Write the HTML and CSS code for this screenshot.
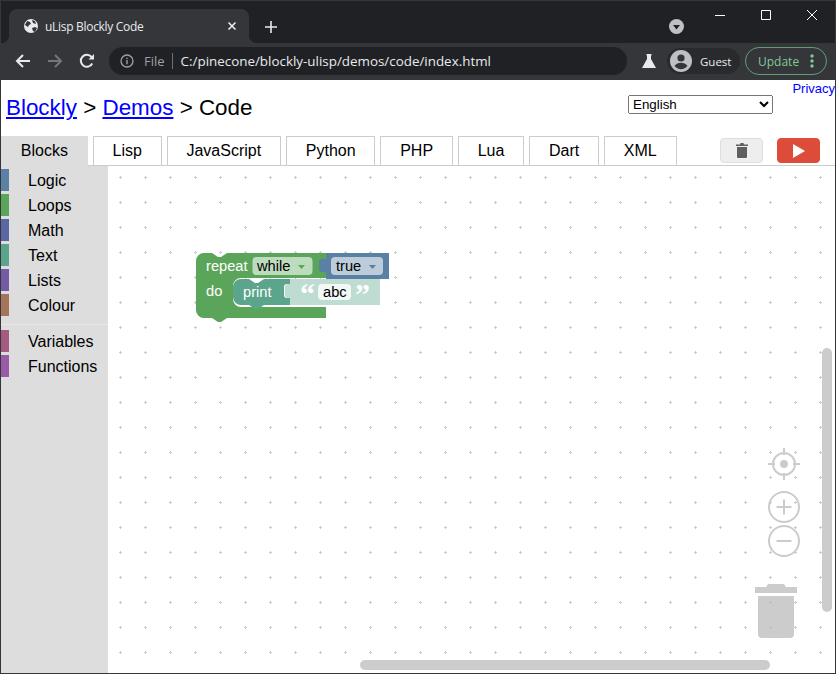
FILE: index.html
```html
<!DOCTYPE html>
<html lang="en">

<head>
    <meta charset="UTF-8">
    <meta name="viewport" content="width=device-width, initial-scale=1.0">
    <title>uLisp Blockly Code</title>
    <link rel="stylesheet" href="styles.css">
</head>

<body>
    <div class="window">
        <!-- Browser tab strip -->
        <div class="tabstrip">
            <div class="browser-tab">
                <svg class="favicon" width="16" height="16" viewBox="0 0 16 16">
                    <circle cx="8" cy="8" r="7" fill="#e8eaed" />
                    <path d="M4 3l3 1 1 2-2 1-1 2-3-2zM9 10l3-1 2 1-2 4-2-1zM9 2l3 1 1 3-3-1z" fill="#35363a" />
                </svg>
                <span class="browser-tab-title">uLisp Blockly Code</span>
                <svg class="tab-close" width="10" height="10" viewBox="0 0 10 10">
                    <path d="M1.5 1.5l7 7M8.5 1.5l-7 7" stroke="#e8eaed" stroke-width="1.6" />
                </svg>
            </div>
            <svg class="new-tab" width="14" height="14" viewBox="0 0 14 14">
                <path d="M7 1v12M1 7h12" stroke="#e8eaed" stroke-width="1.6" />
            </svg>
            <svg class="tab-search" width="15" height="15" viewBox="0 0 15 15">
                <circle cx="7.5" cy="7.5" r="7.5" fill="#bdc1c6" />
                <path d="M4 6h7l-3.500 4.500z" fill="#202124" />
            </svg>
            <div class="window-controls">
                <svg width="10" height="10" viewBox="0 0 10 10">
                    <path d="M0 5.500h10" stroke="#fff" />
                </svg>
                <svg width="10" height="10" viewBox="0 0 10 10">
                    <path d="M.5.500h9v9h-9z" stroke="#fff" fill="none" />
                </svg>
                <svg width="10" height="10" viewBox="0 0 10 10">
                    <path d="M0 0l10 10M10 0L0 10" stroke="#fff" />
                </svg>
            </div>
        </div>

        <!-- Browser toolbar -->
        <div class="toolbar">
            <svg class="nav-icon" width="16" height="16" viewBox="0 0 16 16">
                <path d="M15 8H2M8 2L2 8l6 6" stroke="#e8eaed" stroke-width="2" fill="none" />
            </svg>
            <svg class="nav-icon" width="16" height="16" viewBox="0 0 16 16">
                <path d="M1 8h13M8 2l6 6-6 6" stroke="#74777b" stroke-width="2" fill="none" />
            </svg>
            <svg class="nav-icon" width="16" height="16" viewBox="0 0 16 16">
                <path d="M13.200 10.500A6 6 0 1 1 12.500 4" stroke="#e8eaed" stroke-width="2" fill="none" />
                <path d="M9.500 6.500H15V1z" fill="#e8eaed" />
            </svg>
            <div class="omnibox">
                <svg width="14" height="14" viewBox="0 0 14 14">
                    <circle cx="7" cy="7" r="6" stroke="#9aa0a6" stroke-width="1.300" fill="none" />
                    <path d="M7 6v4.200M7 3.700v1.200" stroke="#9aa0a6" stroke-width="1.400" />
                </svg>
                <span class="omni-scheme">File</span>
                <span class="omni-divider"></span>
                <span class="omni-url">C:/pinecone/blockly-ulisp/demos/code/index.html</span>
            </div>
            <svg class="flask" width="14" height="14" viewBox="0 0 14 14">
                <path d="M4.500 0h5v1.500H9v3.500l5 9H0l5-9V1.500h-.5z" fill="#e8eaed" />
            </svg>
            <div class="guest">
                <svg width="22" height="22" viewBox="0 0 22 22">
                    <circle cx="11" cy="11" r="11" fill="#bdc1c6" />
                    <circle cx="11" cy="8" r="3.600" fill="#35363a" />
                    <path d="M4.500 16c1.500-2.500 4-3.300 6.500-3.300s5 .8 6.500 3.300c-1.500 2-4 3.200-6.500 3.200s-5-1.200-6.500-3.200z" fill="#35363a" />
                </svg>
                <span>Guest</span>
            </div>
            <div class="update">
                <span>Update</span>
                <svg width="4" height="14" viewBox="0 0 4 14">
                    <circle cx="2" cy="2" r="1.700" fill="#81c995" />
                    <circle cx="2" cy="7" r="1.700" fill="#81c995" />
                    <circle cx="2" cy="12" r="1.700" fill="#81c995" />
                </svg>
            </div>
        </div>

        <!-- Page -->
        <div class="page">
            <div class="page-header">
                <h1><a href="#">Blockly</a> &gt; <a href="#">Demos</a> &gt; Code</h1>
                <div class="header-right">
                    <a class="privacy" href="#">Privacy</a>
                    <select class="language">
                        <option>English</option>
                    </select>
                </div>
            </div>

            <div class="tabs">
                <div class="tab tab-on">Blocks</div>
                <div class="tab">Lisp</div>
                <div class="tab">JavaScript</div>
                <div class="tab">Python</div>
                <div class="tab">PHP</div>
                <div class="tab">Lua</div>
                <div class="tab">Dart</div>
                <div class="tab">XML</div>
                <div class="tab-buttons">
                    <button class="btn btn-trash">
                        <svg width="12" height="15" viewBox="0 0 12 15">
                            <path d="M0 1.500h4l.5-1.500h3l.5 1.500h4V3H0zM1 4h10v10a1 1 0 0 1-1 1H2a1 1 0 0 1-1-1z" fill="#5f5f5f" />
                        </svg>
                    </button>
                    <button class="btn btn-run">
                        <svg width="12" height="14" viewBox="0 0 12 14">
                            <path d="M0 0l12 7-12 7z" fill="#fff" />
                        </svg>
                    </button>
                </div>
            </div>

            <div class="editor">
                <div class="toolbox">
                    <div class="cat"><span class="swatch logic"></span>Logic</div>
                    <div class="cat"><span class="swatch loops"></span>Loops</div>
                    <div class="cat"><span class="swatch math"></span>Math</div>
                    <div class="cat"><span class="swatch text"></span>Text</div>
                    <div class="cat"><span class="swatch lists"></span>Lists</div>
                    <div class="cat"><span class="swatch colour"></span>Colour</div>
                    <div class="cat-sep"></div>
                    <div class="cat"><span class="swatch variables"></span>Variables</div>
                    <div class="cat"><span class="swatch functions"></span>Functions</div>
                </div>

                <div class="workspace">
                    <!-- viewBox uses screen coordinates -->
                    <svg class="canvas" width="727" height="507" viewBox="108 166 727 507">
                        <defs>
                            <pattern id="grid" patternUnits="userSpaceOnUse" x="108" y="165" width="25" height="25">
                                <path d="M11 12.500h3M12.500 11v3" stroke="#ccc" />
                            </pattern>
                        </defs>
                        <rect x="108" y="166" width="727" height="507" fill="url(#grid)" />

                        <!-- repeat while -->
                        <path class="b-loop" d="M196 261a8 8 0 0 1 8-8h8l6 4h3l6-4H326v25h-85a8 8 0 0 0-8 8v13a8 8 0 0 0 8 8h85v11H227l-6 4h-3l-6-4h-8a8 8 0 0 1-8-8z" />
                        <text class="b-label" x="206" y="271">repeat</text>
                        <rect x="252.500" y="257" width="60" height="18" rx="4" fill="#bddbbd" />
                        <text class="b-field" x="257" y="271">while</text>
                        <path d="M298 265h7l-3.500 4z" fill="#5ba55b" />
                        <text class="b-label" x="206" y="296">do</text>

                        <!-- true -->
                        <path class="b-logic" d="M326 253h63v26h-63v-7h-4a3 3 0 0 1-3-3v-7a3 3 0 0 1 3-3h4z" />
                        <rect x="331" y="257" width="52" height="18" rx="4" fill="#bdccdb" />
                        <text class="b-field" x="336" y="271">true</text>
                        <path d="M369 265h7l-3.500 4z" fill="#5b80a5" />

                        <!-- print -->
                        <path class="b-text" d="M233 287a8 8 0 0 1 8-8h8l6 4h3l6-4H290v5h-3a3 3 0 0 0-3 3v8a3 3 0 0 0 3 3h3v7H264l-6 4h-3l-6-4h-8a8 8 0 0 1-8-8z" />
                        <text class="b-label" x="243" y="297">print</text>

                        <!-- abc -->
                        <path class="b-string" d="M290 279h90v26h-90v-7h-2a3 3 0 0 1-3-3v-8a3 3 0 0 1 3-3h2z" />
                        <text class="b-quote" x="300" y="304">“</text>
                        <rect x="318" y="284" width="33" height="16" rx="4" fill="#f2f8f6" />
                        <text class="b-field" x="323" y="297">abc</text>
                        <text class="b-quote" x="355" y="304">”</text>

                        <!-- center on blocks -->
                        <g class="ctrl">
                            <circle cx="784" cy="464" r="11" />
                            <path d="M784 448v7M784 473v7M768 464h7M793 464h7" />
                        </g>
                        <circle cx="784" cy="464" r="4" fill="#ccc" />

                        <!-- zoom -->
                        <g class="ctrl">
                            <circle cx="784" cy="507" r="15" />
                            <path d="M776.500 507h15M784 499.500v15" />
                            <circle cx="784" cy="541" r="15" />
                            <path d="M776.500 541h15" />
                        </g>

                        <!-- trashcan -->
                        <path class="trashcan" d="M755 587h11l2-3h16l2 3h11v6h-42zM758 596h36v38a4 4 0 0 1-4 4h-28a4 4 0 0 1-4-4z" />

                        <!-- scrollbars -->
                        <rect x="822" y="348" width="10" height="264" rx="5" fill="#ccc" />
                        <rect x="360" y="660" width="410" height="10" rx="5" fill="#ccc" />
                    </svg>
                </div>
            </div>
        </div>
    </div>
</body>

</html>
```

FILE: styles.css
```css
/* Reset */
* {
    margin: 0;
    padding: 0;
    box-sizing: border-box;
}

body {
    font-family: 'Liberation Sans', sans-serif;
    background-color: #202124;
}

.window {
    width: 836px;
    height: 674px;
    border: 1px solid #35363a;
    display: flex;
    flex-direction: column;
    overflow: hidden;
}

/* Browser tab strip */
.tabstrip {
    height: 42px;
    flex-shrink: 0;
    background-color: #202124;
    display: flex;
    align-items: flex-end;
    padding-left: 8px;
}

.browser-tab {
    position: relative;
    width: 240px;
    height: 34px;
    background-color: #35363a;
    border-radius: 8px 8px 0 0;
    display: flex;
    align-items: center;
    padding: 0 12px 0 14px;
    color: #e8eaed;
    font-family: 'Open Sans', sans-serif;
    font-size: 12px;
}

.browser-tab::before,
.browser-tab::after {
    content: "";
    position: absolute;
    bottom: 0;
    width: 8px;
    height: 8px;
}

.browser-tab::before {
    left: -8px;
    background: radial-gradient(circle at 0 0, transparent 8px, #35363a 8.5px);
}

.browser-tab::after {
    right: -8px;
    background: radial-gradient(circle at 100% 0, transparent 8px, #35363a 8.5px);
}

.browser-tab-title {
    flex: 1;
    margin-left: 6px;
    letter-spacing: -0.3px;
}

.new-tab {
    margin: 0 0 9px 15px;
}

.tab-search {
    margin: 0 0 9px 391px;
}

.window-controls {
    align-self: flex-start;
    display: flex;
    gap: 36px;
    margin: 9px 0 0 31px;
}

/* Browser toolbar */
.toolbar {
    height: 37px;
    flex-shrink: 0;
    background-color: #35363a;
    display: flex;
    align-items: center;
    padding: 0 0 1px 14px;
    font-family: 'Open Sans', sans-serif;
}

.nav-icon {
    margin-right: 16px;
}

.omnibox {
    width: 518px;
    height: 28px;
    margin-left: -2px;
    background-color: #202124;
    border-radius: 14px;
    display: flex;
    align-items: center;
    padding-left: 11px;
    font-size: 13.4px;
}

.omni-scheme {
    color: #9aa0a6;
    margin-left: 10px;
    font-size: 13px;
}

.omni-divider {
    width: 1px;
    height: 16px;
    background-color: #6b6e72;
    margin: 0 8px 0 7px;
}

.omni-url {
    color: #e8eaed;
}

.flask {
    margin-left: 15px;
}

.guest {
    width: 73px;
    height: 26px;
    margin-left: 11px;
    background-color: #292a2d;
    border-radius: 13px;
    display: flex;
    align-items: center;
    gap: 8px;
    padding-left: 3px;
    color: #e8eaed;
    font-size: 11.5px;
}

.update {
    width: 82px;
    height: 28px;
    margin-left: 5px;
    border: 1px solid #5f9e76;
    border-radius: 14px;
    display: flex;
    align-items: center;
    justify-content: space-between;
    padding: 0 12px 0 12px;
    color: #81c995;
    font-size: 12px;
}

/* Page */
.page {
    flex: 1;
    background-color: #fff;
    display: flex;
    flex-direction: column;
    min-height: 0;
}

.page-header {
    height: 56px;
    flex-shrink: 0;
    display: flex;
    justify-content: space-between;
    padding-left: 5px;
}

h1 {
    font-size: 22.4px;
    font-weight: normal;
    margin-top: 15px;
    color: #000;
}

h1 a {
    color: #00f;
}

.header-right {
    display: flex;
    flex-direction: column;
    align-items: flex-end;
}

.privacy {
    font-size: 13px;
    line-height: 13px;
    margin-top: 2px;
    color: #00f;
    text-decoration: none;
}

.language {
    width: 145px;
    height: 19px;
    margin-right: 62px;
    font-family: 'Liberation Sans', sans-serif;
    font-size: 13.33px;
}

/* Tabs */
.tabs {
    height: 30px;
    flex-shrink: 0;
    display: flex;
    gap: 5px;
    border-bottom: 1px solid #ccc;
    font-size: 16px;
}

.tab {
    height: 30px;
    border: 1px solid #ccc;
    border-bottom: none;
    padding: 0 18.8px;
    line-height: 28px;
}

.tab-on {
    background-color: #ddd;
    border-color: #ddd;
}

.tab-buttons {
    margin-left: auto;
    margin-right: 15px;
    display: flex;
    gap: 14px;
    padding-top: 2px;
}

.btn {
    width: 43px;
    height: 25px;
    border-radius: 4px;
    display: flex;
    align-items: center;
    justify-content: center;
}

.btn-trash {
    background-color: #eee;
    border: 1px solid #ddd;
}

.btn-run {
    background-color: #dd4b39;
    border: 1px solid #dd4b39;
}

/* Editor */
.editor {
    flex: 1;
    display: flex;
    min-height: 0;
}

.toolbox {
    width: 107px;
    flex-shrink: 0;
    background-color: #ddd;
    padding-top: 3px;
    font-size: 16px;
}

.cat {
    height: 22px;
    line-height: 24px;
    margin-bottom: 3px;
    display: flex;
    align-items: flex-start;
}

.swatch {
    width: 8px;
    height: 22px;
    margin-right: 19px;
}

.cat-sep {
    height: 1px;
    background-color: #e8e8e8;
    margin: 8px 0 5px;
}

.logic { background-color: #5b80a5; }
.loops { background-color: #5ba55b; }
.math { background-color: #5b67a5; }
.text { background-color: #5ba58c; }
.lists { background-color: #745ba5; }
.colour { background-color: #a5745b; }
.variables { background-color: #a55b80; }
.functions { background-color: #995ba5; }

.workspace {
    flex: 1;
    min-width: 0;
}

.canvas {
    display: block;
}

/* Blocks */
.b-loop { fill: #5ba55b; }
.b-logic { fill: #5b80a5; }
.b-text { fill: #5ba58c; }
.b-string { fill: #bedcd1; }

.b-label,
.b-field {
    font-family: 'Liberation Sans', sans-serif;
    font-size: 14.67px;
}

.b-label { fill: #fff; }
.b-field { fill: #000; }

.b-quote {
    font-family: 'Liberation Serif', serif;
    font-weight: bold;
    font-size: 30px;
    fill: #fff;
}

.ctrl {
    fill: none;
    stroke: #ccc;
    stroke-width: 2;
}

.trashcan {
    fill: #bbb;
    fill-opacity: 0.75;
}
```
